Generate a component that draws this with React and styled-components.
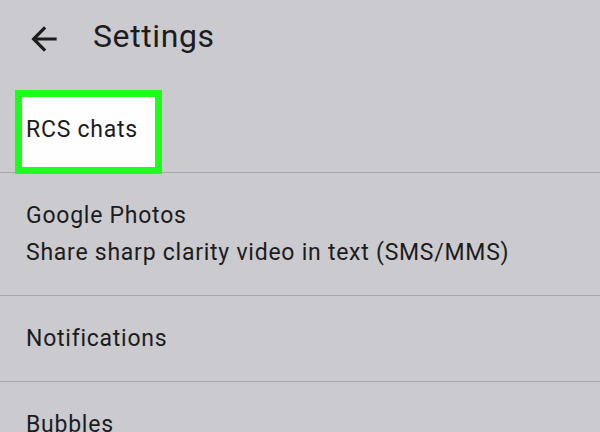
import React from 'react';
import styled, { createGlobalStyle } from 'styled-components';

const GlobalStyle = createGlobalStyle`
  html, body {
    margin: 0;
    padding: 0;
    background: #cbcacf;
  }
  body {
    font-family: Roboto, "Noto Sans", Arial, sans-serif;
    color: #1c1c1e;
    overflow: hidden;
  }
`;

const Screen = styled.div`
  width: 600px;
  height: 432px;
  background: #cbcacf;
  overflow: hidden;
`;

const Header = styled.header`
  display: flex;
  align-items: flex-start;
  height: 40px;
  padding: 16px 0 0 25px;
  margin-bottom: 31px;
`;

const BackButton = styled.button`
  display: flex;
  padding: 0;
  margin-top: 4px;
  border: 0;
  background: none;
  color: #1c1c1e;
  cursor: pointer;
`;

const Title = styled.h1`
  margin: 0 0 0 30px;
  font-size: 32px;
  font-weight: 400;
  line-height: 40px;
  letter-spacing: 0.6px;
`;

const List = styled.ul`
  list-style: none;
  margin: 0;
  padding: 0;
`;

const Row = styled.li`
  padding: 24px 0 24px 26px;
  border-bottom: 1px solid #a8a7ac;
  font-size: 23px;
  line-height: 37px;
  letter-spacing: 0.75px;
`;

const Line = styled.div`
  white-space: nowrap;
`;

const Highlight = styled.div`
  position: relative;
  width: fit-content;
  margin: -21px 0 -26px -11px;
  padding: 14px 17px 19px 4px;
  border: 7px solid #1bff1b;
  background: #fefefe;
`;

const BackArrow = () => (
  <svg width="38" height="38" viewBox="0 0 24 24" fill="currentColor">
    <path d="M20 11H7.83l5.59-5.59L12 4l-8 8 8 8 1.41-1.41L7.83 13H20v-2z" />
  </svg>
);

const App = () => (
  <Screen>
    <GlobalStyle />
    <Header>
      <BackButton aria-label="Back">
        <BackArrow />
      </BackButton>
      <Title>Settings</Title>
    </Header>
    <List>
      <Row>
        <Highlight>RCS chats</Highlight>
      </Row>
      <Row>
        <Line>Google Photos</Line>
        <Line>Share sharp clarity video in text (SMS/MMS)</Line>
      </Row>
      <Row>
        <Line>Notifications</Line>
      </Row>
      <Row>
        <Line>Bubbles</Line>
      </Row>
    </List>
  </Screen>
);

export default App;
